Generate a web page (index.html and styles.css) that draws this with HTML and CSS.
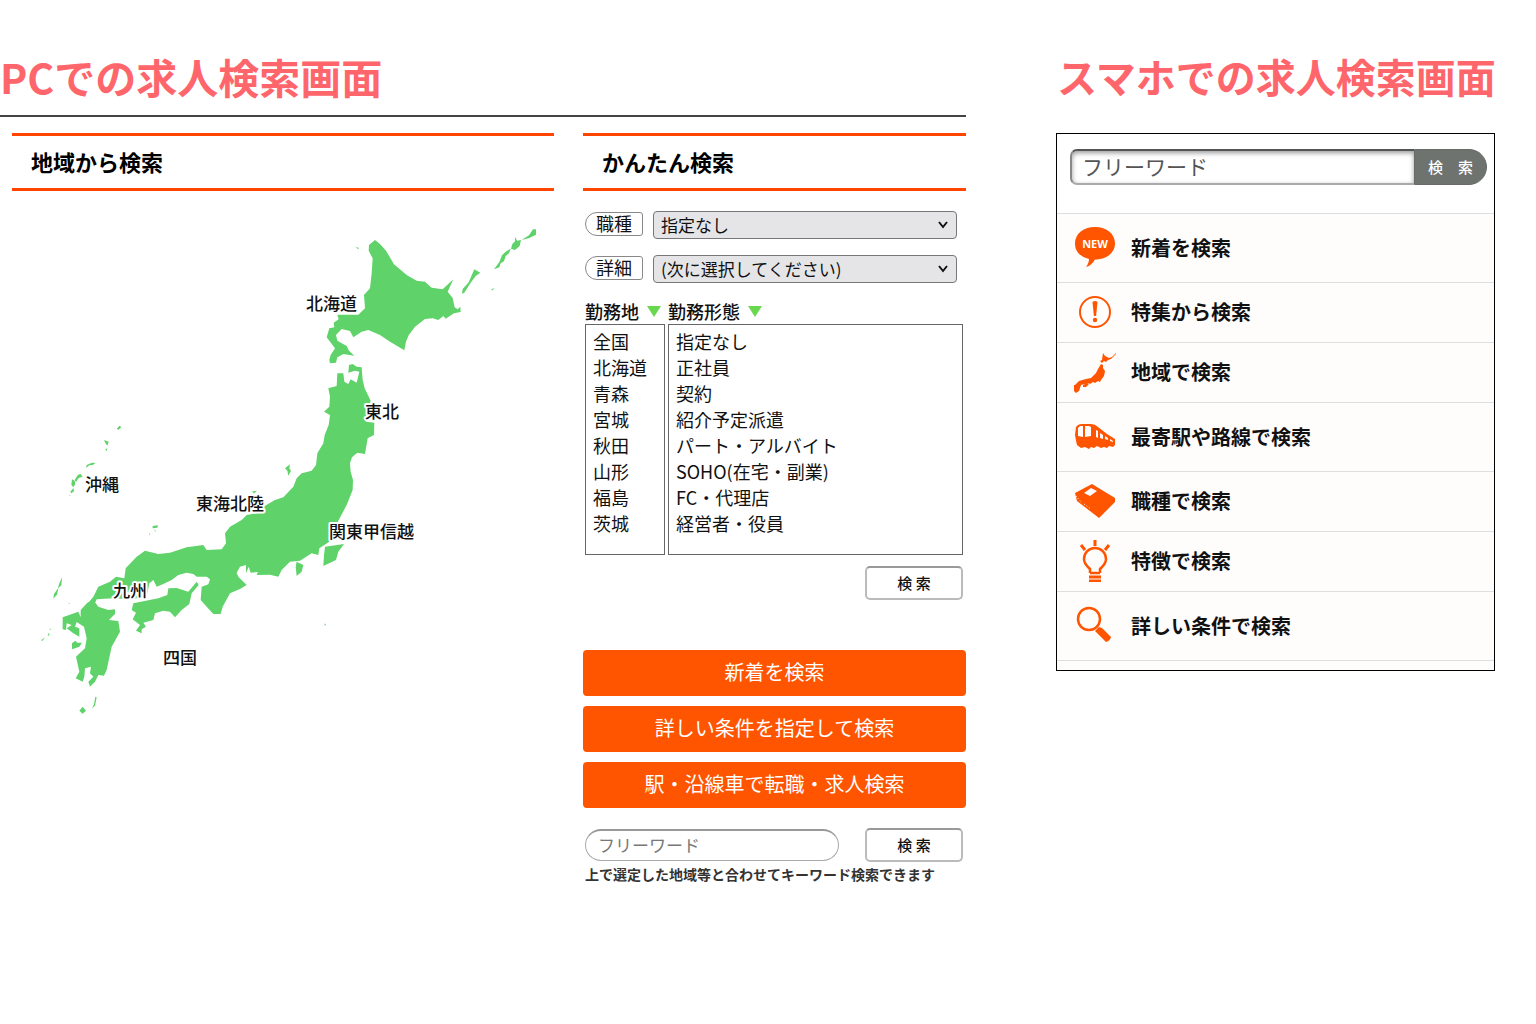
FILE: index.html
```html
<!DOCTYPE html>
<html lang="ja">
<head>
<meta charset="utf-8">
<meta name="viewport" content="width=device-width, initial-scale=1">
<title>求人検索画面</title>
<link rel="stylesheet" href="styles.css">
</head>
<body>
<main class="page">
  <section class="pc">
    <h1 class="title title-pc">PCでの求人検索画面</h1>
    <div class="pc-columns">
      <section>
        <h2 class="section-title">地域から検索</h2>
        <svg class="map" viewBox="12 220 542 500" role="img" aria-label="日本地図">
          <g class="land" transform="translate(300 220) scale(.33333)">
            <path d="M207 75L225 60 240 72 258 92 282 133 320 165 350 182 375 185 395 203 428 208 460 178 443 215 458 234 464 262 473 268 481 260 482 276 462 280 437 296 430 288 415 300 398 295 375 297 345 320 326 346 318 365 313 391 270 365 240 345 205 330 185 335 160 352 150 333 125 327 108 345 112 362 140 378 147 392 163 407 130 402 112 412 108 428 90 430 88 420 92 405 105 385 80 352 88 325 103 322 101 308 116 298 112 284 175 284 195 265 192 225 210 205 215 160 218 115 206 92Z"/>
            <path d="M523 148l18 10-14 10-16 22-18 28-7 3 2-14 18-20zM645 50l6 12 12-2-4 18-14 12-12-4 4-14 8-8zM665 60l22-14 12-18 9 0 0 16-20 10zM632 86l-5 14-10 8-5 16-10 6-4 12-16 6 16-22 8-20 10-10zM572 210l12-7-6 8zM548 153l5-3zM167 80l10 4-3 4zM156 65l3 1z"/>
          </g>
          <g class="land" transform="translate(30 410) scale(.33333)">
            <path d="M922-110L940-110 943-85 955-78 962-92 980-82 988-115 975-118 955-112 957-135 968-138 980-130 995-128 998-90 1004-65 1022-28 1010 35 1033 38 1032 75 1013 85 1005 132 982 128 966 142 960 160 962 185 969 210 968 240 950 285 925 332 898 395 868 415 865 435 845 430 810 452 780 455 755 480 745 500 720 494 680 495 684 486 662 488 656 470 648 490 648 465 630 470 620 488 625 500 650 525 630 537 600 550 578 590 572 612 550 612 530 590 512 570 515 530 535 523 540 508 530 500 500 500 490 492 470 488 445 495 425 510 400 522 380 530 370 510 358 520 350 560 300 568 250 565 200 568 190 590 165 590 190 560 205 530 240 515 258 500 283 505 287 475 320 440 345 422 385 432 420 428 470 412 520 405 530 420 575 418 588 400 585 370 600 350 635 330 650 315 690 308 700 290 735 270 760 262 790 230 800 205 815 190 845 182 858 165 862 130 880 100 884 75 896 45 900 15 882 5 898-10 900-40 895-65 920-72Z"/>
            <path d="M885 410L942 402 925 425 918 450 880 468 882 435ZM800 455L820 465 815 485 800 498 797 470ZM765 175L780 163 778 175 783 182 775 197 772 182Z"/>
            <path d="M152 600L172 578 190 570 205 590 235 600 255 598 255 612 237 630 265 633 270 665 245 710 230 780 222 797 205 795 195 815 180 830 175 815 190 800 180 790 183 770 165 775 163 800 158 815 137 805 148 785 138 740 165 715 170 685 162 650 140 636 135 650 148 655 148 680 130 670 110 655 125 645 110 640 108 660 98 658 98 622 145 605 152 622Z"/>
            <path d="M310 580L385 565 412 555 415 535 440 534 475 545 500 515 506 525 485 550 478 582 455 600 435 622 420 605 400 602 375 610 370 630 340 638 348 650 335 658 335 670 318 662 330 645 308 628 318 608 305 600Z"/>
            <path d="M126 700l10-8 6 6 14 0-8 12-22 8zM158 890l10 12-10 9-10-9zM196 860l4 2-5 25-9 8 6-12zM96 502l-2 24-11 10 5-16zM85 536l-4 18-11 12 2-14 10-14zM60 655l3 4-4 1zM55 670l4 2-6 8zM46 682l-10 12-2-4zM117 578l3 3-4 1zM884 640l4 4-4 3zM268 47l6 4-8 8-6-2zM222 90l14 5-4 12-6-8zM226 118l6-3-2 9zM170 165l16-7 10 1-6 5-12 2-10 8zM152 192l6 8-12 4-8 12-4-6 10-16zM126 208l8 4 2 10-6 10-6-8zM130 234l2 10-8 6-3-5zM368 348l16-2-2 7-14 2zM374 357l4 8-4-2zM357 370l4 2-3 3zM665 245l16-3-8 8zM118 254l4 2-4 1z"/>
          </g>
          <g class="map-labels">
            <a href="#hokkaido"><text x="306" y="310">北海道</text></a>
            <a href="#tohoku"><text x="365" y="418">東北</text></a>
            <a href="#okinawa"><text x="85" y="491">沖縄</text></a>
            <a href="#tokai"><text x="196" y="510">東海北陸</text></a>
            <a href="#kanto"><text x="329" y="538">関東甲信越</text></a>
            <a href="#kyushu"><text x="113" y="597">九州</text></a>
            <a href="#shikoku"><text x="163" y="664">四国</text></a>
          </g>
        </svg>
      </section>

      <section>
        <h2 class="section-title">かんたん検索</h2>
        <form class="quick">
          <div class="field">
            <label class="pill" for="job">職種</label>
            <select class="drop" id="job"><option>指定なし</option></select>
          </div>
          <div class="field">
            <label class="pill" for="detail">詳細</label>
            <select class="drop" id="detail"><option>(次に選択してください)</option></select>
          </div>
          <div class="lists">
            <div class="list-group">
              <label class="list-label" for="place">勤務地 <span class="marker"></span></label>
              <select class="listbox" id="place" multiple size="8">
                <option>全国</option><option>北海道</option><option>青森</option><option>宮城</option><option>秋田</option><option>山形</option><option>福島</option><option>茨城</option>
              </select>
            </div>
            <div class="list-group">
              <label class="list-label" for="style">勤務形態 <span class="marker"></span></label>
              <select class="listbox" id="style" multiple size="8">
                <option>指定なし</option><option>正社員</option><option>契約</option><option>紹介予定派遣</option><option>パート・アルバイト</option><option>SOHO(在宅・副業)</option><option>FC・代理店</option><option>経営者・役員</option>
              </select>
            </div>
          </div>
          <button class="plain-button submit" type="button">検 索</button>
        </form>
        <nav class="actions">
          <button class="action" type="button">新着を検索</button>
          <button class="action" type="button">詳しい条件を指定して検索</button>
          <button class="action" type="button">駅・沿線車で転職・求人検索</button>
        </nav>
        <form class="keyword">
          <input class="keyword-input" type="text" placeholder="フリーワード" aria-label="フリーワード">
          <button class="plain-button" type="button">検 索</button>
        </form>
        <p class="note">上で選定した地域等と合わせてキーワード検索できます</p>
      </section>
    </div>
  </section>

  <section class="phone">
    <h1 class="title">スマホでの求人検索画面</h1>
    <div class="screen">
      <form class="phone-search">
        <input class="phone-input" type="text" placeholder="フリーワード" aria-label="フリーワード">
        <button class="phone-button" type="button">検　索</button>
      </form>
      <ul class="menu">
        <li><a class="menu-row tall" href="#new">
          <svg class="icon" viewBox="0 0 42 42"><path class="fill" d="M21 1C9 1 1 8 1 17.500c0 8 5 13 14 15.500 0 3-1 5-3 8 4-1 7-4 9-7.500 12 0 20-7 20-16C41 8 33 1 21 1z"/><text class="new" x="21" y="22" text-anchor="middle">NEW</text></svg>
          新着を検索</a></li>
        <li><a class="menu-row" href="#feature">
          <svg class="icon" viewBox="0 0 42 42"><circle class="line" cx="21" cy="21" r="15" stroke-width="2"/><path class="fill" d="M18.500 11q2.500-2 5 0l-1.400 14h-2.200z"/><circle class="fill" cx="21" cy="29" r="2.200"/></svg>
          特集から検索</a></li>
        <li><a class="menu-row" href="#area">
          <svg class="icon" viewBox="0 0 42 42"><path class="fill" d="M29 2l2 3 4 2 3-1 4-4 0 1-5 5-3 1-2 2-2-1-2 2-2-2 2-1zM27 13l2 1 0 3 2 3-1 5-3 4-1 2-2-1-3 2-2-1-3 2-2-1-7 2-1 3-1 3-3 2-2-2 0-3-2-3 3 0 4-4 7-2 5-1 5-5 2-4zM9 34l4-2 2 1-3 3-3 0z"/></svg>
          地域で検索</a></li>
        <li><a class="menu-row tall" href="#station">
          <svg class="icon" viewBox="0 0 42 42"><path class="fill" fill-rule="evenodd" d="M2 12Q4 9 8 9h9q4 0 7 3l9 7 8 5v6l-2 2-4-1-2 2-3-1-3 1-4-2-3 2-3-1-2 2-4-2-4 1-4-3Q2 26 1 20zM4 13v8l5 1V11H6zM11 11v11l6-1V12l-2-1zM22 15v7l2 1v-7zM26 18v5l3 1v-4zM31 21v3l3 1v-2zM36 24v2l3 1v-1z"/></svg>
          最寄駅や路線で検索</a></li>
        <li><a class="menu-row" href="#occupation">
          <svg class="icon" viewBox="0 0 42 42"><path class="fill" fill-rule="evenodd" d="M1 13L18 4l23 14v4L25 38 3 21zM10 13l6 3 7-5-6-3z"/><path d="M2 16l6 7M10 24l7 5" fill="none" stroke="#fff" stroke-width="1" stroke-dasharray="1 2"/></svg>
          職種で検索</a></li>
        <li><a class="menu-row" href="#trait">
          <svg class="icon" viewBox="0 0 42 42"><g class="line" stroke-width="2.500"><path d="M16 33v-4c-3-3-6-5-6-10a11 11 0 0 1 22 0c0 5-3 7-6 10v4M16 33h10"/><path stroke-width="3" d="M15 37h12M15 41h12M21 0v6M7 5l4 5M35 5l-4 5"/></g></svg>
          特徴で検索</a></li>
        <li><a class="menu-row tall" href="#advanced">
          <svg class="icon" viewBox="0 0 42 42"><circle class="line" cx="15" cy="15" r="11" stroke-width="2.500"/><path class="fill" d="M21 27l4-4 3 1 9 9q-1 4-5 5l-9-9z"/></svg>
          詳しい条件で検索</a></li>
      </ul>
    </div>
  </section>
</main>
</body>
</html>
```
FILE: styles.css
```css
* { box-sizing: border-box; }

body {
  margin: 0;
  background: #fff;
  color: #111;
  font-family: "Noto Sans CJK JP", sans-serif;
}

button, input, select { font-family: inherit; color: inherit; }

h1, h2, p, ul { margin: 0; padding: 0; }

.page {
  display: grid;
  grid-template-columns: 966fr 439fr;
  gap: 90px;
  padding: 48px 41px 40px 0;
}

.pc, .phone { min-width: 0; }

.title {
  height: 67px;
  padding-left: 1px;
  color: #ff666c;
  font-size: 40px;
  font-weight: 700;
  line-height: 56px;
  white-space: nowrap;
}
.title-pc { padding-left: 0; font-size: 41px; }

.pc-columns {
  display: grid;
  grid-template-columns: 542fr 383fr;
  gap: 29px;
  padding: 16px 0 0 12px;
  border-top: 2px solid #444;
}

.section-title {
  padding: 0 0 2px 19px;
  border-top: 3px solid #ff4500;
  border-bottom: 3px solid #ff4500;
  color: #000;
  font-size: 22px;
  line-height: 50px;
}

.map { display: block; width: 100%; margin-top: 29px; }
.land { fill: #5fd36a; }
.map-labels text {
  fill: #111;
  stroke: #fff;
  stroke-width: 4px;
  stroke-linejoin: round;
  paint-order: stroke;
  font-size: 17px;
  font-weight: 500;
}

.quick { display: flex; flex-direction: column; padding: 20px 3px 0 2px; }

.field { display: flex; gap: 10px; margin-bottom: 16px; padding-right: 6px; }

.pill {
  width: 58px;
  height: 24px;
  margin-top: 1px;
  padding-left: 10px;
  border: 1px solid #888;
  border-radius: 12px 3px 3px 12px;
  font-size: 18px;
  line-height: 20px;
}

.drop {
  flex: 1;
  height: 28px;
  padding: 0 7px 2px;
  appearance: none;
  border: 1px solid #777;
  border-radius: 4px;
  background: #e5e5e8 url("data:image/svg+xml,%3Csvg xmlns='http://www.w3.org/2000/svg' width='10' height='8'%3E%3Cpath d='M1 1l4 5 4-5' fill='none' stroke='%23111' stroke-width='2'/%3E%3C/svg%3E") no-repeat right 8px center;
  font-size: 17px;
}

.lists { display: grid; grid-template-columns: 80px 1fr; gap: 3px; }
.list-group { display: flex; flex-direction: column; min-width: 0; }

.list-label {
  display: flex;
  align-items: center;
  gap: 8px;
  height: 25px;
  padding-bottom: 2px;
  font-size: 18px;
  font-weight: 500;
  white-space: nowrap;
}

.marker {
  margin-top: 2px;
  border: 7px solid transparent;
  border-top: 11px solid #69d84f;
  border-bottom: 0;
}

.listbox {
  width: 100%;
  height: 231px;
  padding: 3px 5px;
  overflow: hidden;
  border: 1px solid #666;
  border-radius: 0;
  background: #fff;
  font-size: 18px;
}
.listbox option { min-height: 26px; padding: 0 2px; line-height: 26px; }

.plain-button {
  width: 98px;
  height: 34px;
  padding: 0 0 2px;
  border: 2px solid #bbb;
  border-top-color: #999;
  border-radius: 5px;
  background: #fff;
  font-size: 15px;
  font-weight: 500;
}
.submit { align-self: flex-end; margin-top: 11px; }

.actions { display: grid; gap: 10px; margin-top: 50px; }
.action {
  height: 46px;
  padding: 0 0 3px;
  border: 0;
  border-radius: 4px;
  background: #ff5400;
  color: #fff;
  font-size: 20px;
}

.keyword {
  display: flex;
  justify-content: space-between;
  gap: 26px;
  margin-top: 20px;
  padding: 0 3px 0 2px;
}
.keyword-input {
  flex: 1;
  min-width: 0;
  height: 32px;
  margin-top: 1px;
  padding: 0 12px 2px;
  border: 1px solid #aaa;
  border-top: 2px solid #999;
  border-radius: 16px;
  font-size: 17px;
}
.keyword-input::placeholder { color: #777; }

.note {
  padding: 2px;
  color: #333;
  font-size: 14px;
  font-weight: 700;
  line-height: 20px;
  white-space: nowrap;
}

.screen {
  margin-top: 18px;
  padding-bottom: 9px;
  border: 1px solid #000;
  background: #fffcfc;
}

.phone-search { display: flex; padding: 15px 7px 28px 13px; background: #fff; }
.phone-input {
  flex: 1;
  min-width: 0;
  height: 36px;
  padding: 0 10px 2px;
  border: 2px solid #888;
  border-top-color: #555;
  border-right: 0;
  border-bottom-color: #aaa;
  border-radius: 7px 0 0 7px;
  box-shadow: inset 0 2px 5px #999;
  font-size: 21px;
}
.phone-input::placeholder { color: #555; }
.phone-button {
  width: 73px;
  height: 36px;
  padding: 0 0 1px;
  border: 1px solid #666b68;
  border-radius: 0 18px 18px 0;
  background: #6e7370;
  color: #fff;
  font-size: 15px;
  font-weight: 500;
}

.menu { border-bottom: 1px solid #dedede; list-style: none; }
.menu-row {
  display: flex;
  align-items: center;
  gap: 15px;
  height: 60px;
  padding: 0 0 2px 17px;
  border-top: 1px solid #dedede;
  color: #111;
  font-size: 20px;
  font-weight: 700;
  text-decoration: none;
}
.tall { height: 69px; }

.icon { width: 42px; height: 42px; flex: none; }
.fill { fill: #ff5400; }
.line { fill: none; stroke: #ff5400; }
.new {
  fill: #fff;
  font-family: "Noto Sans", sans-serif;
  font-size: 11px;
  font-weight: 700;
}
```
